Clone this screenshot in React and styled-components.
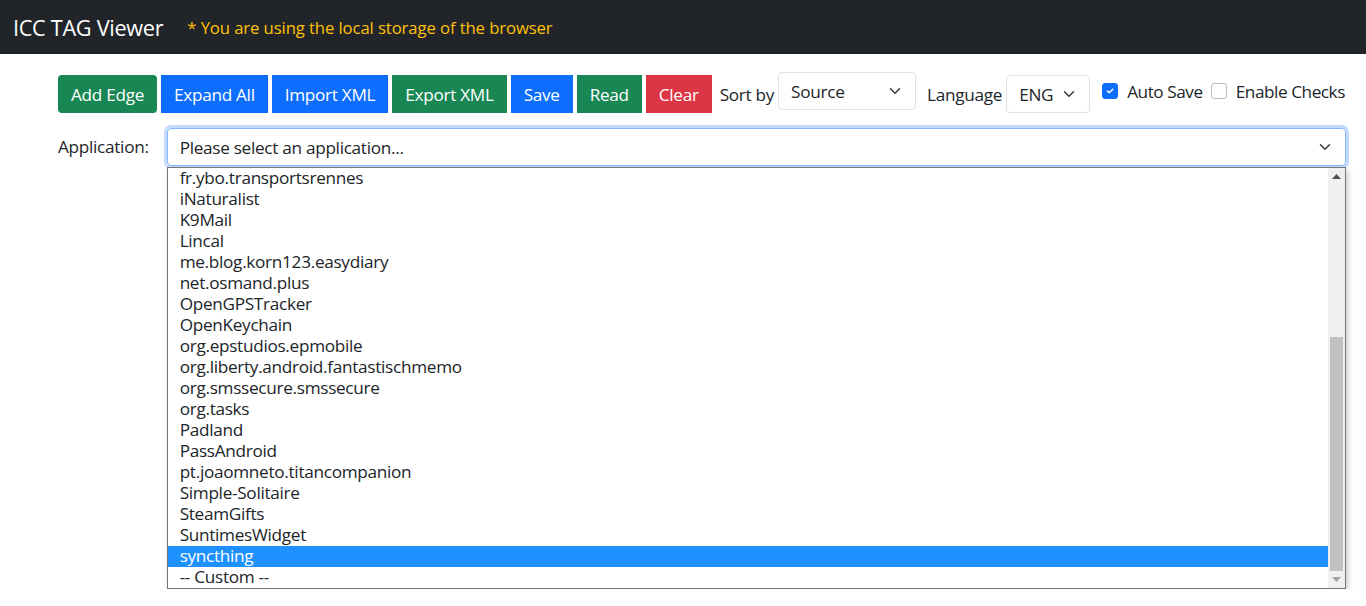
import React from 'react';
import styled, { createGlobalStyle } from 'styled-components';

const GlobalStyle = createGlobalStyle`
    body {
        margin: 0;
        font-family: 'Open Sans', 'Noto Sans', sans-serif;
        color: #212529;
        background: #fff;
    }
`;

const Navbar = styled.div`
    height: 54px;
    background: #212529;
    display: flex;
    align-items: center;
    padding-left: 13px;
`;

const Brand = styled.span`
    color: #fff;
    font-size: 21.7px;
    margin-right: 24px;
    letter-spacing: -0.3px;
`;

const Warning = styled.span`
    color: #ffc107;
    font-size: 16.7px;
    letter-spacing: -0.1px;
`;

const Content = styled.div`
    padding: 21px 20px 0 58px;
`;

const Toolbar = styled.div`
    display: flex;
    align-items: center;
    gap: 4px;
    height: 38px;
`;

const colors = { green: '#198754', blue: '#0d6efd', red: '#dc3545' };

const Button = styled.button`
    height: 38px;
    border: none;
    padding: 0 13px;
    font-family: inherit;
    font-size: 17.2px;
    letter-spacing: -0.3px;
    color: #fff;
    background: ${p => colors[p.$color]};
    border-radius: ${p => (p.$rounded ? '4px' : '0')};
    white-space: nowrap;
`;

const Label = styled.span`
    font-size: 17.2px;
    margin-left: ${p => p.$ml || 0}px;
    letter-spacing: -0.3px;
    white-space: nowrap;
`;

const SelectBox = styled.div`
    width: ${p => p.$w}px;
    height: 38px;
    box-sizing: border-box;
    border: 1px solid #dee2e6;
    border-radius: 4px;
    display: flex;
    align-items: center;
    justify-content: space-between;
    padding: 0 14px 0 12px;
    font-size: 17.2px;
    letter-spacing: -0.3px;
    position: relative;
    top: ${p => p.$dy || 0}px;
    flex-shrink: 0;
`;

const Check = styled.span`
    width: 14px;
    height: 14px;
    flex-shrink: 0;
    border-radius: 3px;
    border: 1px solid ${p => (p.$checked ? '#0d6efd' : '#b8bcc0')};
    background: ${p => (p.$checked ? '#0d6efd' : '#fff')};
    display: inline-flex;
    align-items: center;
    justify-content: center;
    margin-left: ${p => p.$ml || 0}px;
    margin-right: 5px;
    position: relative;
    top: -3px;
`;

const CheckLabel = styled(Label)`
    position: relative;
    top: -3px;
    letter-spacing: -0.45px;
`;

const AppRow = styled.div`
    display: flex;
    align-items: flex-start;
    margin-top: 15px;
`;

const AppLabel = styled(Label)`
    line-height: 38px;
`;

const SelectWrap = styled.div`
    flex: 1;
    margin-left: 18px;
    display: flex;
    flex-direction: column;
`;

const AppSelect = styled.div`
    height: 38px;
    box-sizing: border-box;
    border: 1px solid #86b7fe;
    border-radius: 4px;
    box-shadow: 0 0 0 3px rgba(13, 110, 253, 0.25);
    display: flex;
    align-items: center;
    justify-content: space-between;
    padding: 0 14px 0 12px;
    font-size: 17.2px;
    letter-spacing: -0.3px;
`;

const Dropdown = styled.div`
    margin-top: 1px;
    height: 422px;
    box-sizing: border-box;
    border: 1px solid #767676;
    background: #fff;
    box-shadow: 2px 3px 6px rgba(0, 0, 0, 0.2);
    display: flex;
    position: relative;
    z-index: 1;
`;

const List = styled.div`
    flex: 1;
`;

const Item = styled.div`
    height: 21px;
    line-height: 20px;
    padding-left: 12px;
    font-size: 17.2px;
    letter-spacing: -0.3px;
    color: ${p => (p.$selected ? '#fff' : '#212529')};
    background: ${p => (p.$selected ? '#1e90ff' : 'transparent')};
`;

const Scrollbar = styled.div`
    width: 17px;
    background: #f0f0f0;
    display: flex;
    flex-direction: column;
    align-items: center;
`;

const Arrow = styled.div`
    height: 17px;
    display: flex;
    align-items: center;
    justify-content: center;
`;

const Track = styled.div`
    flex: 1;
    width: 100%;
    display: flex;
    flex-direction: column;
    justify-content: flex-end;
    align-items: center;
`;

const Thumb = styled.div`
    width: 13px;
    height: 234px;
    background: #c1c1c1;
`;

const Chevron = ({ size = 12 }) => (
    <svg width={size} height={size} viewBox="0 0 16 16">
        <path d="M2 5l6 6 6-6" fill="none" stroke="#343a40" strokeWidth="2" strokeLinecap="round" strokeLinejoin="round" />
    </svg>
);

const apps = [
    'fr.ybo.transportsrennes',
    'iNaturalist',
    'K9Mail',
    'Lincal',
    'me.blog.korn123.easydiary',
    'net.osmand.plus',
    'OpenGPSTracker',
    'OpenKeychain',
    'org.epstudios.epmobile',
    'org.liberty.android.fantastischmemo',
    'org.smssecure.smssecure',
    'org.tasks',
    'Padland',
    'PassAndroid',
    'pt.joaomneto.titancompanion',
    'Simple-Solitaire',
    'SteamGifts',
    'SuntimesWidget',
    'syncthing',
    '-- Custom --',
];

const App = () => (
    <>
        <GlobalStyle />
        <Navbar>
            <Brand>ICC TAG Viewer</Brand>
            <Warning>* You are using the local storage of the browser</Warning>
        </Navbar>
        <Content>
            <Toolbar>
                <Button $color="green" $rounded>Add Edge</Button>
                <Button $color="blue">Expand All</Button>
                <Button $color="blue">Import XML</Button>
                <Button $color="green">Export XML</Button>
                <Button $color="blue">Save</Button>
                <Button $color="green">Read</Button>
                <Button $color="red">Clear</Button>
                <Label $ml={4}>Sort by</Label>
                <SelectBox $w={138} $dy={-3}>Source <Chevron /></SelectBox>
                <Label $ml={7}>Language</Label>
                <SelectBox $w={84}>ENG <Chevron /></SelectBox>
                <Check $checked $ml={8}>
                    <svg width="10" height="10" viewBox="0 0 20 20">
                        <path d="M5 10l3.5 3.5 7-7" fill="none" stroke="#fff" strokeWidth="3" strokeLinecap="round" strokeLinejoin="round" />
                    </svg>
                </Check>
                <CheckLabel>Auto Save</CheckLabel>
                <Check $ml={4} />
                <CheckLabel>Enable Checks</CheckLabel>
            </Toolbar>
            <AppRow>
                <AppLabel>Application:</AppLabel>
                <SelectWrap>
                    <AppSelect>Please select an application... <Chevron /></AppSelect>
                    <Dropdown>
                        <List>
                            {apps.map(a => (
                                <Item key={a} $selected={a === 'syncthing'}>{a}</Item>
                            ))}
                        </List>
                        <Scrollbar>
                            <Arrow>
                                <svg width="9" height="5"><path d="M0 5L4.5 0 9 5z" fill="#505050" /></svg>
                            </Arrow>
                            <Track><Thumb /></Track>
                            <Arrow>
                                <svg width="9" height="5"><path d="M0 0L4.5 5 9 0z" fill="#a3a3a3" /></svg>
                            </Arrow>
                        </Scrollbar>
                    </Dropdown>
                </SelectWrap>
            </AppRow>
        </Content>
    </>
);

export default App;
